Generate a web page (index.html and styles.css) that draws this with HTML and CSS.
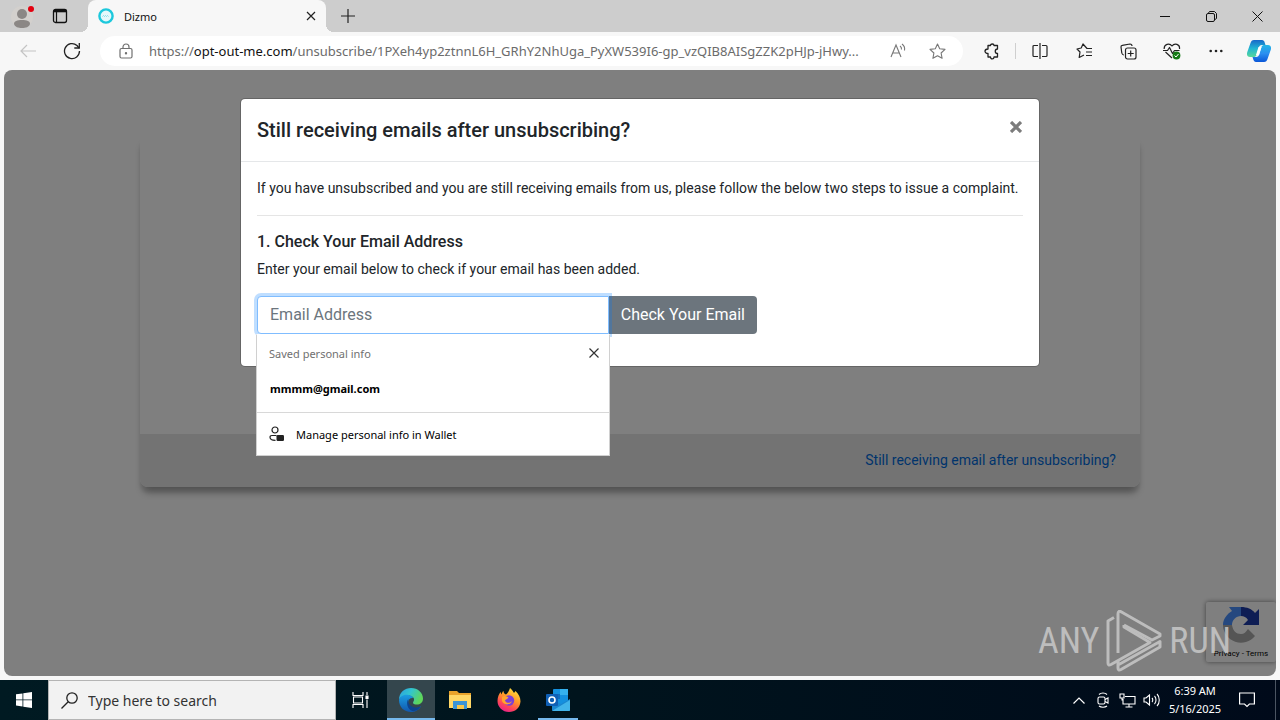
FILE: index.html
```html
<!DOCTYPE html>
<html lang="en">
<head>
    <meta charset="UTF-8">
    <meta name="viewport" content="width=device-width, initial-scale=1.0">
    <title>Dizmo</title>
    <link rel="stylesheet" href="styles.css">
</head>
<body>

<!-- Tabs -->
<header class="tab-strip">
    <button class="profile" aria-label="Profile">
        <svg width="24" height="26" viewBox="0 0 24 26">
            <circle cx="12" cy="14" r="11" fill="#d3d0cd"/>
            <circle cx="12" cy="11" r="5" fill="#8b8785"/>
            <path d="M4 21c0-3 3-4 8-4s8 1 8 4c-1 3-4 4-8 4s-7-1-8-4z" fill="#8b8785"/>
            <circle cx="21" cy="6" r="3" fill="#e3000f"/>
        </svg>
    </button>
    <button class="tab-actions" aria-label="Tab actions">
        <svg width="16" height="16" viewBox="0 0 16 16" fill="none" stroke="#111">
            <rect x="1.5" y="1.5" width="13" height="13" rx="2" stroke-width="1.3"/>
            <path d="M1.5 3h13" stroke-width="2.6"/>
            <path d="M4.5 4v10" stroke-width="1.2"/>
        </svg>
    </button>
    <div class="tab">
        <svg width="16" height="16" viewBox="0 0 16 16" fill="none">
            <circle cx="8" cy="8" r="6.6" fill="#e4f8fb" stroke="#1cc8dc" stroke-width="2.4"/>
            <path d="M4.5 8.5l1-1 1 1 1-1 1 1 1-1 1 1" stroke="#7edbe6" stroke-width="1"/>
        </svg>
        <span class="tab-title">Dizmo</span>
        <button class="tab-close" aria-label="Close tab">
            <svg width="10" height="10" viewBox="0 0 10 10" stroke="#222" stroke-width="1.2"><path d="M1 1l8 8M9 1l-8 8"/></svg>
        </button>
    </div>
    <button class="new-tab" aria-label="New tab">
        <svg width="14" height="14" viewBox="0 0 14 14" stroke="#222" stroke-width="1.2"><path d="M7 0v14M0 7h14"/></svg>
    </button>
    <div class="window-controls">
        <button aria-label="Minimize"><svg width="10" height="10" viewBox="0 0 10 10" stroke="#111"><path d="M0 5.5h10"/></svg></button>
        <button aria-label="Restore"><svg width="11" height="11" viewBox="0 0 11 11" fill="none" stroke="#111"><rect x=".5" y="2.5" width="8" height="8" rx="1.5"/><path d="M2.5 2.5v-.5l1-1.5h5l2 2v5l-1.5 1"/></svg></button>
        <button aria-label="Close"><svg width="11" height="11" viewBox="0 0 11 11" stroke="#111"><path d="M.5.5l10 10M10.5.5l-10 10"/></svg></button>
    </div>
</header>

<!-- Address bar -->
<nav class="toolbar">
    <button class="tool" aria-label="Back">
        <svg width="16" height="14" viewBox="0 0 16 14" fill="none" stroke="#c4c4c4" stroke-width="1.2"><path d="M16 7H1M7 1L1 7l6 6"/></svg>
    </button>
    <button class="tool" aria-label="Refresh">
        <svg width="18" height="18" viewBox="0 0 18 18" fill="none" stroke="#222" stroke-width="1.3"><path d="M16.500 9A7.500 7.500 0 1 1 14 3.500L16 6"/><path d="M16.300 1v5h-5"/></svg>
    </button>
    <div class="address">
        <svg class="lock" width="14" height="16" viewBox="0 0 14 16" fill="none" stroke="#707070" stroke-width="1.2">
            <rect x="1" y="5.500" width="12" height="9.500" rx="1.5"/><path d="M4 5.500V4a3 3 0 0 1 6 0v1.500"/><circle cx="7" cy="10.300" r=".6" fill="#707070"/>
        </svg>
        <div class="url" role="textbox" aria-label="Address">https://<span class="host">opt-out-me.com</span>/unsubscribe/1PXeh4yp2ztnnL6H_GRhY2NhUga_PyXW539I6-gp_vzQIB8AISgZZK2pHJp-jHwy...</div>
        <button class="address-tool" aria-label="Read aloud">
            <svg width="17" height="16" viewBox="0 0 17 16" fill="none" stroke="#777" stroke-width="1.1"><path d="M1 14L6 2l5 12M2.800 10h6.500M10 3c1.200.8 1.700 2 1.500 3.500M12 1c2 1.500 3 4 2.500 6.500"/></svg>
        </button>
        <button class="address-tool" aria-label="Add to favorites">
            <svg width="17" height="17" viewBox="0 0 17 17" fill="none" stroke="#777" stroke-width="1.1" stroke-linejoin="round"><path d="M8.500 1l2.200 4.800 5.300.6-3.900 3.600 1 5.300-4.600-2.600-4.600 2.600 1-5.300L1 6.400l5.300-.6z"/></svg>
        </button>
    </div>
    <div class="tools">
        <button class="tool" aria-label="Extensions">
            <svg width="16" height="17" viewBox="0 0 16 17" fill="none" stroke="#222" stroke-width="1.3" stroke-linejoin="round"><path d="M4 2.500h2.500c0-2 3.500-2 3.500 0h3.500V6c-3 0-3 4.500 0 4.500V14H10c0 2.500-3.500 2.500-3.500 0H4v-3.500c-4 0-4-4.500 0-4.500z"/></svg>
        </button>
        <span class="divider"></span>
        <button class="tool" aria-label="Split screen">
            <svg width="16" height="16" viewBox="0 0 16 16" fill="none" stroke="#222" stroke-width="1.2"><path d="M6 2.500H2a1 1 0 0 0-1 1v9a1 1 0 0 0 1 1h4M10 2.500h4a1 1 0 0 1 1 1v9a1 1 0 0 1-1 1h-4M8 0v16"/></svg>
        </button>
        <button class="tool" aria-label="Favorites">
            <svg width="17" height="16" viewBox="0 0 17 16" fill="none" stroke="#222" stroke-width="1.2" stroke-linejoin="round"><path d="M16 5.500h-5L7 1 5.200 5 1 6l3 3-.8 5.500L8 12M10 9h6M10 12.500h6"/></svg>
        </button>
        <button class="tool" aria-label="Collections">
            <svg width="17" height="17" viewBox="0 0 17 17" fill="none" stroke="#222" stroke-width="1.2"><path d="M4 12c-1.500 0-2-1-2.200-2L1 4c-.1-1 .5-1.500 1.300-1.600L10 1c1 0 2 .5 2 2"/><rect x="5.500" y="5" width="10.500" height="11" rx="2"/><path d="M10.700 7.500v6M7.700 10.500h6"/></svg>
        </button>
        <button class="tool" aria-label="Browser essentials">
            <svg width="18" height="17" viewBox="0 0 18 17" fill="none" stroke="#222" stroke-width="1.2" stroke-linejoin="round"><path d="M1.200 6C.8 1 6.500-.5 9 3c2.500-3.500 8.200-2 7.500 3M2.500 9L9 15M0 7.500h4.500l2-3 3 6 2-3h5"/><circle cx="13.500" cy="12.500" r="3.900" fill="#157a15" stroke="none"/><path d="M11.500 12.500l1.500 1.500 2.500-3" stroke="#fff" stroke-width="1"/></svg>
        </button>
        <button class="tool" aria-label="Settings and more">
            <svg width="14" height="4" viewBox="0 0 14 4" fill="#222"><circle cx="1.700" cy="2" r="1.300"/><circle cx="7" cy="2" r="1.300"/><circle cx="12.300" cy="2" r="1.300"/></svg>
        </button>
        <button class="tool" aria-label="Copilot">
            <svg width="24" height="22" viewBox="0 0 24 22">
                <defs>
                    <linearGradient id="cpLeft" x1="0" y1="0" x2="0" y2="1"><stop offset="0" stop-color="#1768c9"/><stop offset=".5" stop-color="#21b5d3"/><stop offset="1" stop-color="#58d89b"/></linearGradient>
                    <linearGradient id="cpRight" x1="0" y1="0" x2="0" y2="1"><stop offset="0" stop-color="#24b6e6"/><stop offset=".5" stop-color="#2b8ff0"/><stop offset="1" stop-color="#0a57d8"/></linearGradient>
                </defs>
                <path d="M7 0h8c1.500 0 2.200 1 2.600 2.200L18.500 5H15c-2 0-2.700 1-3.200 2.500L9.500 15C9 16.500 8 17 6.500 17H3c-3 0-3.500-2.500-2.700-5L3.500 3C4.200 1 5 0 7 0z" fill="url(#cpLeft)"/>
                <path d="M17 22H9c-1.500 0-2.200-1-2.600-2.200L5.500 17H9c2 0 2.700-1 3.200-2.500L14.500 7C15 5.500 16 5 17.500 5H21c3 0 3.500 2.500 2.700 5l-3.200 9c-.7 2-1.500 3-3.500 3z" fill="url(#cpRight)"/>
                <path d="M11.500 7h3L12 15H9z" fill="#fff"/>
            </svg>
        </button>
    </div>
</nav>

<!-- Page content -->
<main class="viewport">
    <div class="card">
        <div class="card-body"></div>
        <div class="card-footer"><a href="#complaint">Still receiving email after unsubscribing?</a></div>
    </div>

    <div class="captcha">
        <svg width="38" height="38" viewBox="0 0 38 38">
            <path class="arrow-left" d="M19 1H7l3 4C5 8 1 13 1 19h9c0-5 4-9 9-9z"/>
            <path class="arrow-right" d="M19 1c6 0 11 2 14 6l4-4v16H21l5-5c-2-3-4-4-7-4z"/>
            <path class="arrow-bottom" d="M1 19a18 18 0 0 0 32 11l-7-7c-2 3-4 5-7 5-5 0-8-3-9-9z"/>
        </svg>
        <span>Privacy - Terms</span>
    </div>

    <div class="backdrop">
        <section class="modal" id="complaint">
            <div class="modal-header">
                <h5>Still receiving emails after unsubscribing?</h5>
                <button class="close" aria-label="Close">
                    <svg width="12" height="12" viewBox="0 0 12 12" stroke="#7c7c7c" stroke-width="3.2"><path d="M1 1l10 10M11 1L1 11"/></svg>
                </button>
            </div>
            <div class="modal-body">
                <p>If you have unsubscribed and you are still receiving emails from us, please follow the below two steps to issue a complaint.</p>
                <hr>
                <h6><label for="email">1. Check Your Email Address</label></h6>
                <p>Enter your email below to check if your email has been added.</p>
                <form class="input-group">
                    <div class="field">
                        <input type="email" id="email" placeholder="Email Address">
                        <!-- Browser autofill popup -->
                        <div class="autofill">
                            <div class="autofill-head">
                                <span>Saved personal info</span>
                                <button type="button" aria-label="Dismiss"><svg width="10" height="10" viewBox="0 0 10 10" stroke="#333" stroke-width="1.2"><path d="M.5.5l9 9M9.500.5l-9 9"/></svg></button>
                            </div>
                            <button type="button" class="autofill-item">mmmm@gmail.com</button>
                            <button type="button" class="autofill-manage">
                                <svg width="16" height="16" viewBox="0 0 16 16" fill="none" stroke="#222" stroke-width="1.2"><circle cx="6" cy="4" r="3"/><path d="M7.500 9.500H3c-1.500 0-2 .7-2 1.700C1 13 3 14.300 6.500 14.300"/><rect x="7.500" y="9" width="7.500" height="6" rx="1.2" fill="#222" stroke="none"/></svg>
                                Manage personal info in Wallet
                            </button>
                        </div>
                    </div>
                    <button type="button" class="btn">Check Your Email</button>
                </form>
            </div>
        </section>
    </div>

    <div class="watermark">
        <span>ANY</span>
        <svg width="56" height="62" viewBox="0 0 56 62" fill="none" stroke="#c8c8c8" stroke-width="3" stroke-linejoin="round">
            <path d="M8 7.500L2 11v42q0 3 3 1.500L44 32.500L18 17v-2"/>
            <path d="M12 43V4q0-4 3.500-2L54 24v2l-8 4L18 15"/>
            <path d="M12 51v7q0 3 3 1.500L54 37v-5.500L12 55"/>
        </svg>
        <span>RUN</span>
    </div>
</main>

<!-- Windows taskbar -->
<footer class="taskbar">
    <button class="start" aria-label="Start">
        <svg width="16" height="16" viewBox="0 0 16 16" fill="#fff"><path d="M0 2.300L6.500 1.400v6.100H0zM7.300 1.300L16 0v7.500H7.300zM0 8.300h6.500v6.200L0 13.600zM7.300 8.300H16V16l-8.700-1.300z"/></svg>
    </button>
    <label class="search">
        <svg width="17" height="17" viewBox="0 0 17 17" fill="none" stroke="#222" stroke-width="1.3"><circle cx="11" cy="6" r="5.200"/><path d="M7.200 9.800L.5 16.500"/></svg>
        <input type="text" placeholder="Type here to search" aria-label="Search">
    </label>
    <div class="apps">
        <button class="app" aria-label="Task view">
            <svg width="17" height="16" viewBox="0 0 17 16" fill="none" stroke="#fff" stroke-width="1.1"><path d="M1 0v3.500h10V0M1 16v-3.500h10V16M1.500 5h9v6h-9zM15 0v3M15 7.500V16"/><path d="M14 4h2v2.500h-2z" fill="#fff"/></svg>
        </button>
        <button class="app active" aria-label="Microsoft Edge">
            <svg width="24" height="24" viewBox="0 0 24 24">
                <defs>
                    <linearGradient id="edgeTop" x1="0" y1="0" x2="1" y2=".4"><stop offset="0" stop-color="#2b9ee0"/><stop offset=".5" stop-color="#32c5cf"/><stop offset="1" stop-color="#5ed65a"/></linearGradient>
                    <linearGradient id="edgeLow" x1="0" y1="0" x2="0" y2="1"><stop offset="0" stop-color="#1b9de2"/><stop offset="1" stop-color="#1257ad"/></linearGradient>
                </defs>
                <path d="M0 12C0 4 6 0 12 0c7 0 12 5 12 10.500 0 4-3 6-6 6-4 0-4.500-1.500-3.500-3C16.500 10 13 7.500 9 7.500 5 7.500 1 9 0 12z" fill="url(#edgeTop)"/>
                <path d="M0 12c1-4 5-5.500 8.500-5.200C12 7 14 9 14 10c-6-.5-7 8 0 10 3 .8 6.500-.5 8-2-2 4-6 6-10 6C5 24 0 19 0 12z" fill="url(#edgeLow)"/>
                <path d="M9.500 10.500c-3 4-1 11.500 4.500 12.700 3.500-.2 6.500-2.200 8-5.200-2 1.500-5.500 2-8 1C10 17.500 8.500 14 9.500 10.500z" fill="#0d438e"/>
            </svg>
        </button>
        <button class="app" aria-label="File Explorer">
            <svg width="22" height="20" viewBox="0 0 22 20"><path d="M0 1h8l2 2h12v15H0z" fill="#e9a32b"/><path d="M0 5h22v13H0z" fill="#ffd766"/><path d="M4 11h14v8h-3v-4H8v4H4z" fill="#3a94d6"/><path d="M8 15h7v4H8z" fill="#f6c64b"/></svg>
        </button>
        <button class="app" aria-label="Firefox">
            <svg width="24" height="24" viewBox="0 0 24 24">
                <defs><linearGradient id="fox" x1=".8" y1="0" x2=".3" y2="1"><stop offset="0" stop-color="#ffe83f"/><stop offset=".45" stop-color="#ff9629"/><stop offset=".75" stop-color="#ff4657"/><stop offset="1" stop-color="#e8208a"/></linearGradient></defs>
                <path d="M13 0c2 1.500 3 3.500 4 5l1.500-2c3 3 5 6 5 10.500C23 20 18 24 12 24 5.500 24 .5 19 .5 13c0-4 1.500-7 3-9l1 2.500C5 5 5.500 3.500 6.500 3c0 2 1 3 2.500 3.500C11 5 12 3 13 0z" fill="url(#fox)"/>
                <circle cx="12" cy="12.500" r="5.200" fill="#7a3fd8"/>
                <path d="M5 9c2-2 5-1 6.500.5-1 2-3 1.500-3.500 3 1 3 5 3 7 .5-1 4-8 5-10 0z" fill="#ffa52b"/>
            </svg>
        </button>
        <button class="app running" aria-label="Outlook">
            <svg width="24" height="22" viewBox="0 0 24 22"><rect x="7" width="15" height="15" rx="1" fill="#1490df"/><path d="M7 5h7v5H7z" fill="#0f6cbd"/><path d="M14 0h8v6h-8z" fill="#35b1ee"/><path d="M6 10l9 5 9-5v11a1 1 0 0 1-1 1H7a1 1 0 0 1-1-1z" fill="#1a86d0"/><path d="M6 22l18-11v10a1 1 0 0 1-1 1z" fill="#42b4ea"/><rect y="5" width="12" height="12" rx="1" fill="#0f5fb5"/><circle cx="6" cy="11" r="3" fill="none" stroke="#fff" stroke-width="1.6"/></svg>
        </button>
    </div>
    <div class="tray">
        <button aria-label="Show hidden icons"><svg width="12" height="7" viewBox="0 0 12 7" fill="none" stroke="#fff" stroke-width="1.2"><path d="M.5 6.500L6 1l5.500 5.500"/></svg></button>
        <button aria-label="Meet Now"><svg width="12" height="16" viewBox="0 0 12 16" fill="none" stroke="#fff" stroke-width="1.1"><rect x="1" y="5" width="7" height="7" rx="1.5"/><path d="M8 7.500l3-1.500v5L8 9.500M2 2.500c2-2 6-2 8 0M2 14c2 1.700 6 1.700 8 0"/></svg></button>
        <button aria-label="Network"><svg width="17" height="15" viewBox="0 0 17 15" fill="none" stroke="#fff" stroke-width="1.1"><path d="M6 3.500h10v7.500H4V6M10 11v3M6.500 14h7M1 1h4v4H1zM3 5v2h1"/></svg></button>
        <button aria-label="Volume"><svg width="17" height="14" viewBox="0 0 17 14" fill="none" stroke="#fff" stroke-width="1.1"><path d="M1 5h2l3.500-3v10L3 9H1zM9 5c1 1 1 3 0 4M11.500 3c2 2 2 6 0 8M14 1c3 3 3 9 0 12"/></svg></button>
        <div class="clock"><time>6:39 AM</time><time>5/16/2025</time></div>
        <button class="notifications" aria-label="Notifications"><svg width="16" height="16" viewBox="0 0 16 16" fill="none" stroke="#fff" stroke-width="1.2"><path d="M.6 1h14.800v11h-5L8 14.500 5.500 12H.6z"/></svg></button>
        <span class="show-desktop"></span>
    </div>
</footer>

</body>
</html>
```
FILE: styles.css
```css
* {
    box-sizing: border-box;
}
body {
    margin: 0;
    height: 100vh;
    display: flex;
    flex-direction: column;
    overflow: hidden;
    background-color: #f7f7f7;
    font-family: "Noto Sans", sans-serif;
    color: #212529;
}
button {
    display: flex;
    align-items: center;
    justify-content: center;
    padding: 0;
    border: none;
    background: none;
    font-family: inherit;
    color: inherit;
    cursor: pointer;
}
svg {
    flex: none;
}

/* Tabs */
.tab-strip {
    display: flex;
    height: 32px;
    flex: none;
    background-color: #cdcdcd;
}
.profile {
    width: 44px;
}
.tab-actions {
    width: 32px;
    margin-right: 12px;
}
.tab {
    position: relative;
    display: flex;
    align-items: center;
    width: 238px;
    padding: 0 10px;
    border-radius: 8px 8px 0 0;
    background-color: #f7f7f7;
    color: #111;
    font-size: 11px;
}
.tab::before,
.tab::after {
    content: "";
    position: absolute;
    bottom: 0;
    width: 8px;
    height: 8px;
}
.tab::before {
    right: 100%;
    background: radial-gradient(circle at 0 0, transparent 8px, #f7f7f7 8px);
}
.tab::after {
    left: 100%;
    background: radial-gradient(circle at 100% 0, transparent 8px, #f7f7f7 8px);
}
.tab-title {
    flex: 1;
    margin-left: 10px;
}
.new-tab {
    width: 44px;
}
.window-controls {
    display: flex;
    margin-left: auto;
}
.window-controls button {
    width: 46px;
}

/* Address bar */
.toolbar {
    display: flex;
    align-items: center;
    height: 38px;
    flex: none;
    padding-left: 6px;
}
.tool {
    width: 44px;
    height: 30px;
}
.address {
    display: flex;
    align-items: center;
    flex: 1;
    min-width: 0;
    height: 30px;
    margin: 0 7px 0 6px;
    padding: 0 6px 0 19px;
    border-radius: 15px;
    background-color: #fff;
}
.url {
    flex: 1;
    min-width: 0;
    margin-left: 16px;
    overflow: hidden;
    white-space: nowrap;
    font-size: 13px;
    color: #6b6b6b;
}
.host {
    color: #111;
}
.address-tool {
    width: 39px;
    height: 30px;
}
.tools {
    display: flex;
    align-items: center;
}
.divider {
    width: 1px;
    height: 16px;
    margin: 0 2px 0 1px;
    background-color: #cfcfcf;
}
.tool:last-child {
    width: 42px;
}

/* Page content */
.viewport {
    position: relative;
    flex: 1;
    min-height: 0;
    margin: 0 4px 4px;
    border-radius: 8px;
    overflow: hidden;
    background-color: #fff;
    font-family: Roboto, sans-serif;
    font-size: 14px;
    line-height: 21px;
}
.card {
    display: flex;
    flex-direction: column;
    max-width: 1000px;
    height: 353px;
    margin: 64px auto 0;
    border-radius: 8px;
    box-shadow: 0 8px 8px -3px rgba(0, 0, 0, 0.35), 0 6px 3px rgba(0, 0, 0, 0.06);
}
.card-body {
    flex: 1;
    border-radius: 8px 8px 0 0;
    background-color: #fff;
}
.card-footer {
    padding: 16px 24px;
    border-radius: 0 0 8px 8px;
    background-color: #e6e6e6;
    text-align: right;
}
.card-footer a {
    color: #0069d9;
    text-decoration: none;
}
.captcha {
    position: absolute;
    right: 0;
    bottom: 14px;
    width: 70px;
    height: 60px;
    padding-top: 4px;
    border-radius: 2px;
    box-shadow: 0 0 5px #808080;
    background-color: #fff;
    text-align: center;
}
.captcha svg {
    display: block;
    margin: 0 auto;
}
.captcha span {
    display: block;
    font-size: 8px;
    line-height: 20px;
    color: #000;
}
.arrow-left {
    fill: #4a90ff;
}
.arrow-right {
    fill: #1c3aa9;
}
.arrow-bottom {
    fill: #ababab;
}
.backdrop {
    position: absolute;
    inset: 0;
    padding: 28px;
    background-color: rgba(0, 0, 0, 0.5);
}
.modal {
    max-width: 800px;
    margin: 0 auto;
    border: 1px solid rgba(0, 0, 0, 0.2);
    border-radius: 5px;
    background-color: #fff;
    background-clip: padding-box;
}
.modal-header {
    display: flex;
    justify-content: space-between;
    align-items: flex-start;
    padding: 16px;
    border-bottom: 1px solid #e5e7e9;
}
h5 {
    margin: 0;
    font-size: 20px;
    line-height: 30px;
    font-weight: 500;
}
.close {
    width: 14px;
    height: 24px;
}
.modal-body {
    padding: 16px;
}
.modal-body p {
    margin: 0 0 16px;
}
hr {
    margin: 16px 0;
    border: 0;
    border-top: 1px solid #e5e5e5;
}
h6 {
    margin: 0 0 8px;
    font-size: 16px;
    line-height: 19px;
    font-weight: 500;
}
.input-group {
    display: flex;
    max-width: 500px;
    height: 38px;
    margin-bottom: 16px;
}
.field {
    position: relative;
    flex: 1;
}
.field input {
    width: 100%;
    height: 38px;
    padding: 0 12px 2px;
    border: 1px solid #80bdff;
    border-radius: 4px 0 0 4px;
    outline: none;
    box-shadow: 0 0 0 3px rgba(0, 123, 255, 0.25);
    background-color: #fff;
    font-family: inherit;
    font-size: 16px;
}
.field input::placeholder {
    color: #6c757d;
}
.btn {
    padding: 0 12px 2px;
    border-radius: 0 4px 4px 0;
    background-color: #6c757d;
    color: #fff;
    font-size: 16px;
}

/* Autofill popup */
.autofill {
    position: absolute;
    top: 100%;
    left: -1px;
    right: -1px;
    border: 1px solid #d0d0d0;
    border-top-color: #fff;
    background-color: #fff;
    font-family: "Noto Sans", sans-serif;
    font-size: 11px;
    color: #000;
}
.autofill-head {
    display: flex;
    justify-content: space-between;
    align-items: center;
    height: 36px;
    padding: 0 10px 0 12px;
    color: #707070;
}
.autofill-item {
    width: 100%;
    height: 41px;
    padding: 0 13px 6px;
    justify-content: flex-start;
    font-size: 11px;
    font-weight: 700;
}
.autofill-manage {
    width: 100%;
    height: 43px;
    padding-left: 12px;
    gap: 11px;
    justify-content: flex-start;
    border-top: 1px solid #d8d8d8;
    font-size: 11px;
}

/* Watermark */
.watermark {
    position: absolute;
    right: 45px;
    bottom: 4px;
    display: flex;
    align-items: center;
    gap: 7px;
    font-family: "Liberation Sans Narrow", "Roboto Condensed", Roboto, sans-serif;
    font-size: 36px;
    line-height: 62px;
    font-weight: 400;
    color: #c8c8c8;
    opacity: 0.85;
    pointer-events: none;
}

/* Taskbar */
.taskbar {
    display: flex;
    height: 40px;
    flex: none;
    background: linear-gradient(90deg, #001a22, #00141d 45%, #000a1a);
    color: #fff;
}
.start {
    width: 48px;
}
.search {
    display: flex;
    align-items: center;
    gap: 10px;
    width: 288px;
    padding: 0 12px;
    border: 1px solid #b4b4b4;
    background-color: #f2f2f2;
}
.search input {
    flex: 1;
    min-width: 0;
    padding: 0;
    border: none;
    outline: none;
    background: none;
    font-family: inherit;
    font-size: 14px;
}
.search input::placeholder {
    color: #333;
}
.apps {
    display: flex;
    gap: 1px;
}
.app {
    position: relative;
    width: 48px;
}
.app.active {
    margin-left: 2px;
    background-color: #34464d;
}
.app.active::after,
.app.running::after {
    content: "";
    position: absolute;
    left: 0;
    right: 0;
    bottom: 0;
    height: 2px;
    background-color: #76b9ed;
}
.app.running::after {
    left: 4px;
    right: 4px;
}
.tray {
    display: flex;
    margin-left: auto;
}
.tray button {
    width: 24px;
}
.clock {
    display: flex;
    flex-direction: column;
    align-items: center;
    justify-content: center;
    width: 64px;
    font-size: 11px;
    line-height: 18px;
}
.tray .notifications {
    width: 40px;
}
.show-desktop {
    width: 5px;
    margin-left: 8px;
    border-left: 1px solid #4b5562;
}
```
